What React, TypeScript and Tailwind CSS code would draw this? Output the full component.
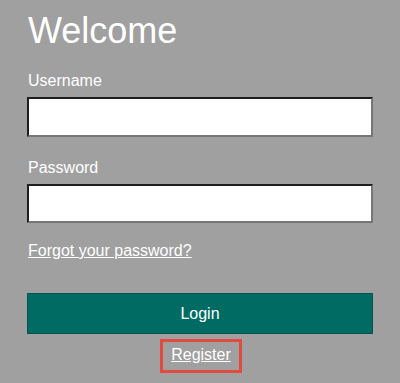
export default function App() {
  return (
    <div className="min-h-[383px] w-full bg-[#a0a0a0] px-[27px] pt-[10px] font-['Liberation_Sans',Arial,sans-serif] text-white">
      {/* Title */}
      <h1 className="text-[36px] leading-[41px] ml-[1px]">Welcome</h1>

      {/* Form */}
      <form className="mt-[21px] flex flex-col">
        <label className="block text-[16px] leading-[18px] ml-[1px]">Username</label>
        <input
          type="text"
          className="mt-[7px] h-[40px] w-full border-2 border-t-[#1e1e1e] border-l-[#1e1e1e] border-r-[#767676] border-b-[#767676] bg-white px-2 text-black outline-none"
        />

        <label className="mt-[22px] block text-[16px] leading-[18px] ml-[1px]">Password</label>
        <input
          type="password"
          className="mt-[7px] h-[39px] w-full border-2 border-t-[#1e1e1e] border-l-[#1e1e1e] border-r-[#767676] border-b-[#767676] bg-white px-2 text-black outline-none"
        />

        <a href="#" className="mt-[19px] self-start text-[16px] leading-[18px] underline ml-[1px]">
          Forgot your password?
        </a>

        <button
          type="submit"
          className="mt-[33px] h-[41px] w-full border border-[#00554f] bg-[#006b63] text-[16px] text-white"
        >
          Login
        </button>

        {/* Footer Link */}
        <div className="mt-[5px] flex justify-center leading-[18px]">
          <span className="inline-block border-[3px] border-[#e2493f] px-[8px] pt-[4px] pb-[6px] ml-[2px] leading-[18px]">
            <a href="#" className="text-[16px] leading-[18px] underline">
              Register
            </a>
          </span>
        </div>
      </form>
    </div>
  );
}
